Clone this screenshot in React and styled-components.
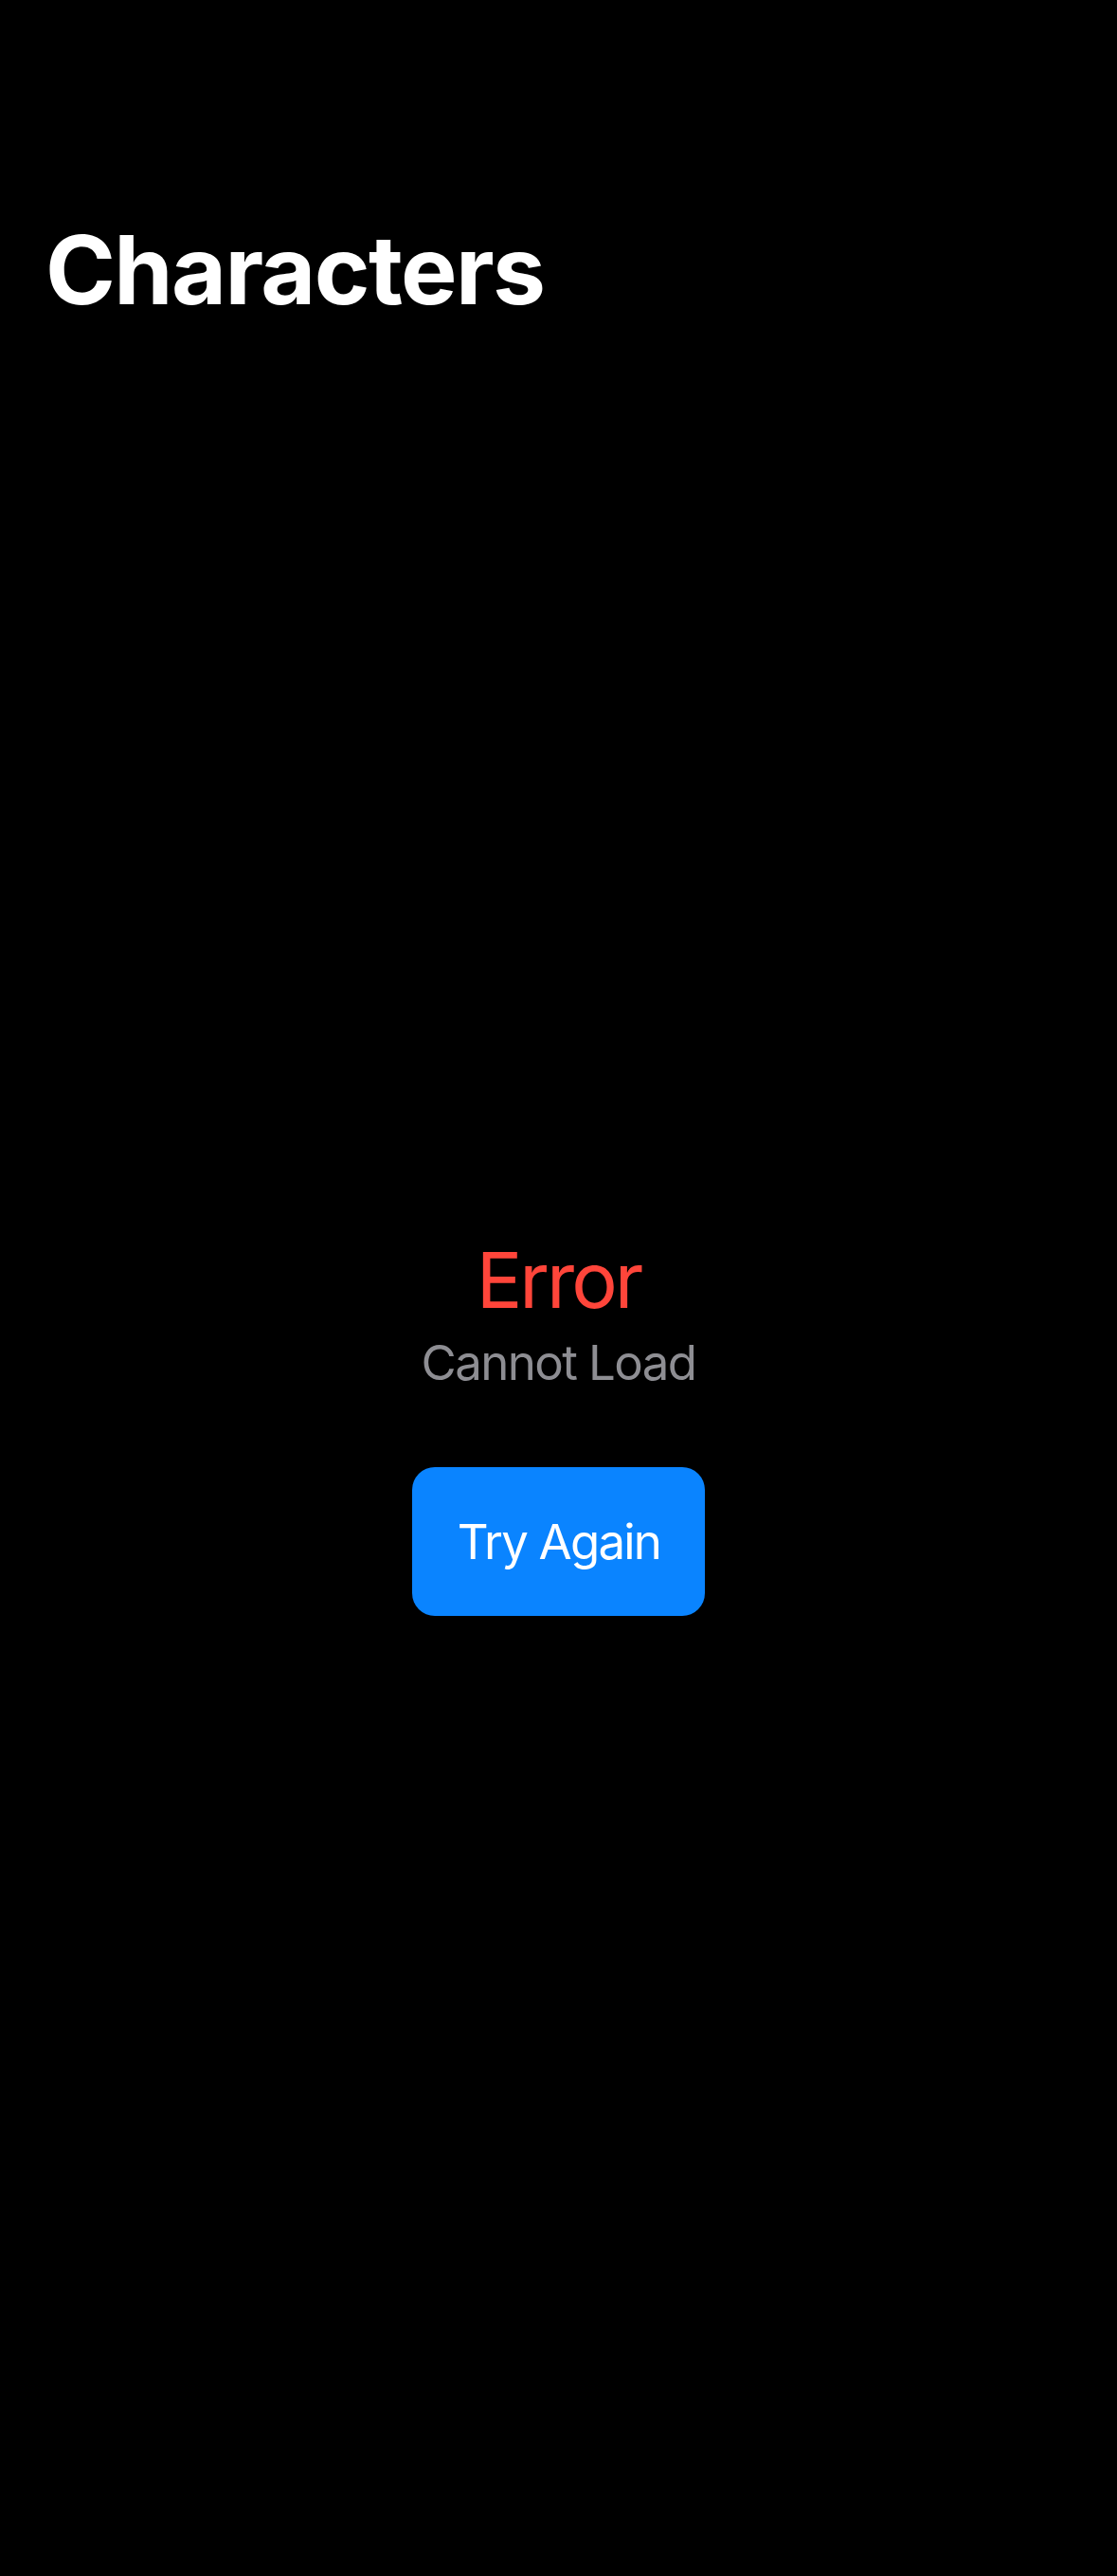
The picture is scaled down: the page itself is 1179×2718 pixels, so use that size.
import React from "react";
import styled, { createGlobalStyle } from "styled-components";

const Global = createGlobalStyle`
  html, body { margin: 0; padding: 0; background: #000; }
  body { font-family: Inter, "Noto Sans", "Liberation Sans", sans-serif; -webkit-font-smoothing: antialiased; }
  * { box-sizing: border-box; }
`;

const Page = styled.div`
  min-height: 2718px;
  display: flex;
  flex-direction: column;
  background: #000;
`;

const Header = styled.header`
  padding: 225px 48px 0;
`;

const Title = styled.h1`
  margin: 0;
  font-size: 100px;
  line-height: 120px;
  font-weight: 700;
  color: #fff;
  letter-spacing: -1.6px;
`;

const Main = styled.main`
  flex: 1;
  display: flex;
  flex-direction: column;
  align-items: center;
  justify-content: center;
  padding-bottom: 47px;
`;

const ErrorTitle = styled.div`
  font-size: 81px;
  line-height: 81px;
  font-weight: 400;
  color: #ff453a;
  letter-spacing: -3px;
`;

const Message = styled.div`
  margin-top: 16px;
  font-size: 51px;
  line-height: 60px;
  color: #8e8e93;
  letter-spacing: -1.6px;
`;

const Button = styled.button`
  margin-top: 80px;
  height: 157px;
  padding: 0 47px 0 48px;
  border: none;
  border-radius: 24px;
  background: #0a84ff;
  color: #fff;
  font-family: inherit;
  font-size: 51px;
  line-height: 60px;
  font-weight: 400;
  letter-spacing: -1.8px;
  cursor: pointer;
`;

export default function App() {
  return (
    <>
      <Global />
      <Page>
        <Header>
          <Title>Characters</Title>
        </Header>
        <Main>
          <ErrorTitle>Error</ErrorTitle>
          <Message>Cannot Load</Message>
          <Button>Try Again</Button>
        </Main>
      </Page>
    </>
  );
}
